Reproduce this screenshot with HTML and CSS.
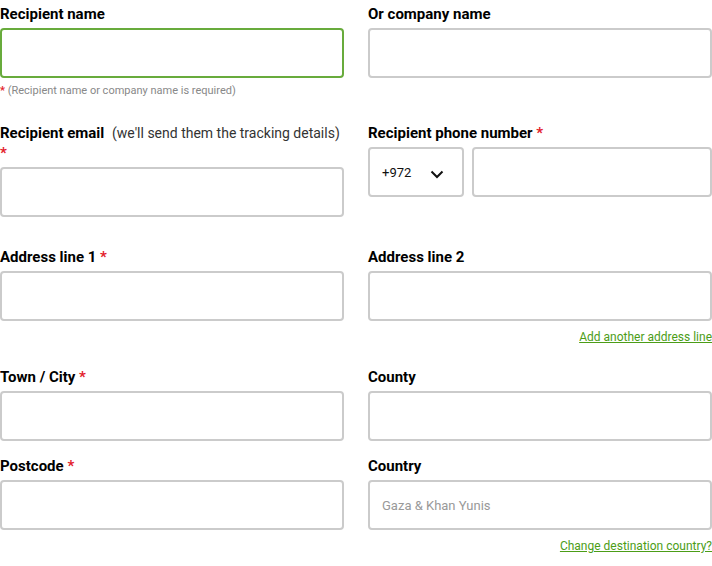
FILE: index.html
```html
<!DOCTYPE html>
<html>
  <head>
    <title>Recipient details</title>
    <link rel="stylesheet" href="styles.css">
  </head>
  <body>
    <form class="recipient-form">
      <div class="form-row">
        <div class="field">
          <label class="field-label">Recipient name</label>
          <input class="text-input focused" type="text">
          <p class="field-hint"><span class="required">*</span> (Recipient name or company name is required)</p>
        </div>
        <div class="field">
          <label class="field-label">Or company name</label>
          <input class="text-input" type="text">
        </div>
      </div>

      <div class="form-row form-row-loose">
        <div class="field">
          <label class="field-label">Recipient email <span class="label-note">(we'll send them the tracking details)</span> <span class="required">*</span></label>
          <input class="text-input" type="email">
        </div>
        <div class="field">
          <label class="field-label">Recipient phone number <span class="required">*</span></label>
          <div class="phone-group">
            <div class="dial-code">
              <span>+972</span>
              <svg class="chevron" width="14" height="9" viewBox="0 0 14 9">
                <path d="M1.5 1.5 L7 7 L12.5 1.5" fill="none" stroke="#111" stroke-width="2"/>
              </svg>
            </div>
            <input class="text-input" type="tel">
          </div>
        </div>
      </div>

      <div class="form-row">
        <div class="field">
          <label class="field-label">Address line 1 <span class="required">*</span></label>
          <input class="text-input" type="text">
        </div>
        <div class="field">
          <label class="field-label">Address line 2</label>
          <input class="text-input" type="text">
          <a class="field-link" href="#">Add another address line</a>
        </div>
      </div>

      <div class="form-row">
        <div class="field">
          <label class="field-label">Town / City <span class="required">*</span></label>
          <input class="text-input" type="text">
        </div>
        <div class="field">
          <label class="field-label">County</label>
          <input class="text-input" type="text">
        </div>
      </div>

      <div class="form-row">
        <div class="field">
          <label class="field-label">Postcode <span class="required">*</span></label>
          <input class="text-input" type="text">
        </div>
        <div class="field">
          <label class="field-label">Country</label>
          <div class="text-input static-input">Gaza &amp; Khan Yunis</div>
          <a class="field-link" href="#">Change destination country?</a>
        </div>
      </div>
    </form>
  </body>
</html>
```

FILE: styles.css
```css
body {
  margin: 0;
  background-color: #fff;
  font-family: Roboto, "Liberation Sans", sans-serif;
  color: #111;
}
.recipient-form {
  width: 712px;
  padding-top: 4px;
}
.form-row {
  display: grid;
  grid-template-columns: 1fr 1fr;
  column-gap: 24px;
  align-items: start;
  margin-bottom: 15px;
}
.form-row-loose {
  margin-bottom: 30px;
}
.field {
  display: flex;
  flex-flow: column nowrap;
}
.field-label {
  display: block;
  font-size: 15px;
  line-height: 20px;
  font-weight: 700;
  margin-bottom: 4px;
  color: #000;
}
.label-note {
  font-size: 14px;
  font-weight: 400;
  color: #333;
  margin-left: 4px;
}
.required {
  color: #e3202b;
  font-weight: 700;
}
.text-input {
  box-sizing: border-box;
  width: 100%;
  height: 50px;
  margin: 0;
  border: 2px solid #cbcbcb;
  border-radius: 4px;
  background-color: #fff;
  font-family: inherit;
  font-size: 14px;
}
.text-input.focused {
  border-color: #68ab3c;
  outline: none;
}
.static-input {
  display: flex;
  align-items: center;
  padding: 0 12px;
  color: #999;
  font-size: 13px;
}
.field-hint {
  margin: 6px 0 10px;
  font-size: 11px;
  line-height: 14px;
  color: #888;
}
.phone-group {
  display: flex;
  flex-flow: row nowrap;
}
.dial-code {
  box-sizing: border-box;
  flex: 0 0 96px;
  height: 50px;
  margin-right: 8px;
  padding: 0 12px;
  display: flex;
  align-items: center;
  justify-content: space-between;
  border: 2px solid #cbcbcb;
  border-radius: 4px;
  font-size: 13px;
}
.chevron {
  margin-top: 4px;
  margin-right: 6px;
}
.field-link {
  align-self: flex-end;
  margin: 8px 0 7px;
  font-size: 12px;
  line-height: 16px;
  color: #4c9d17;
}
```
